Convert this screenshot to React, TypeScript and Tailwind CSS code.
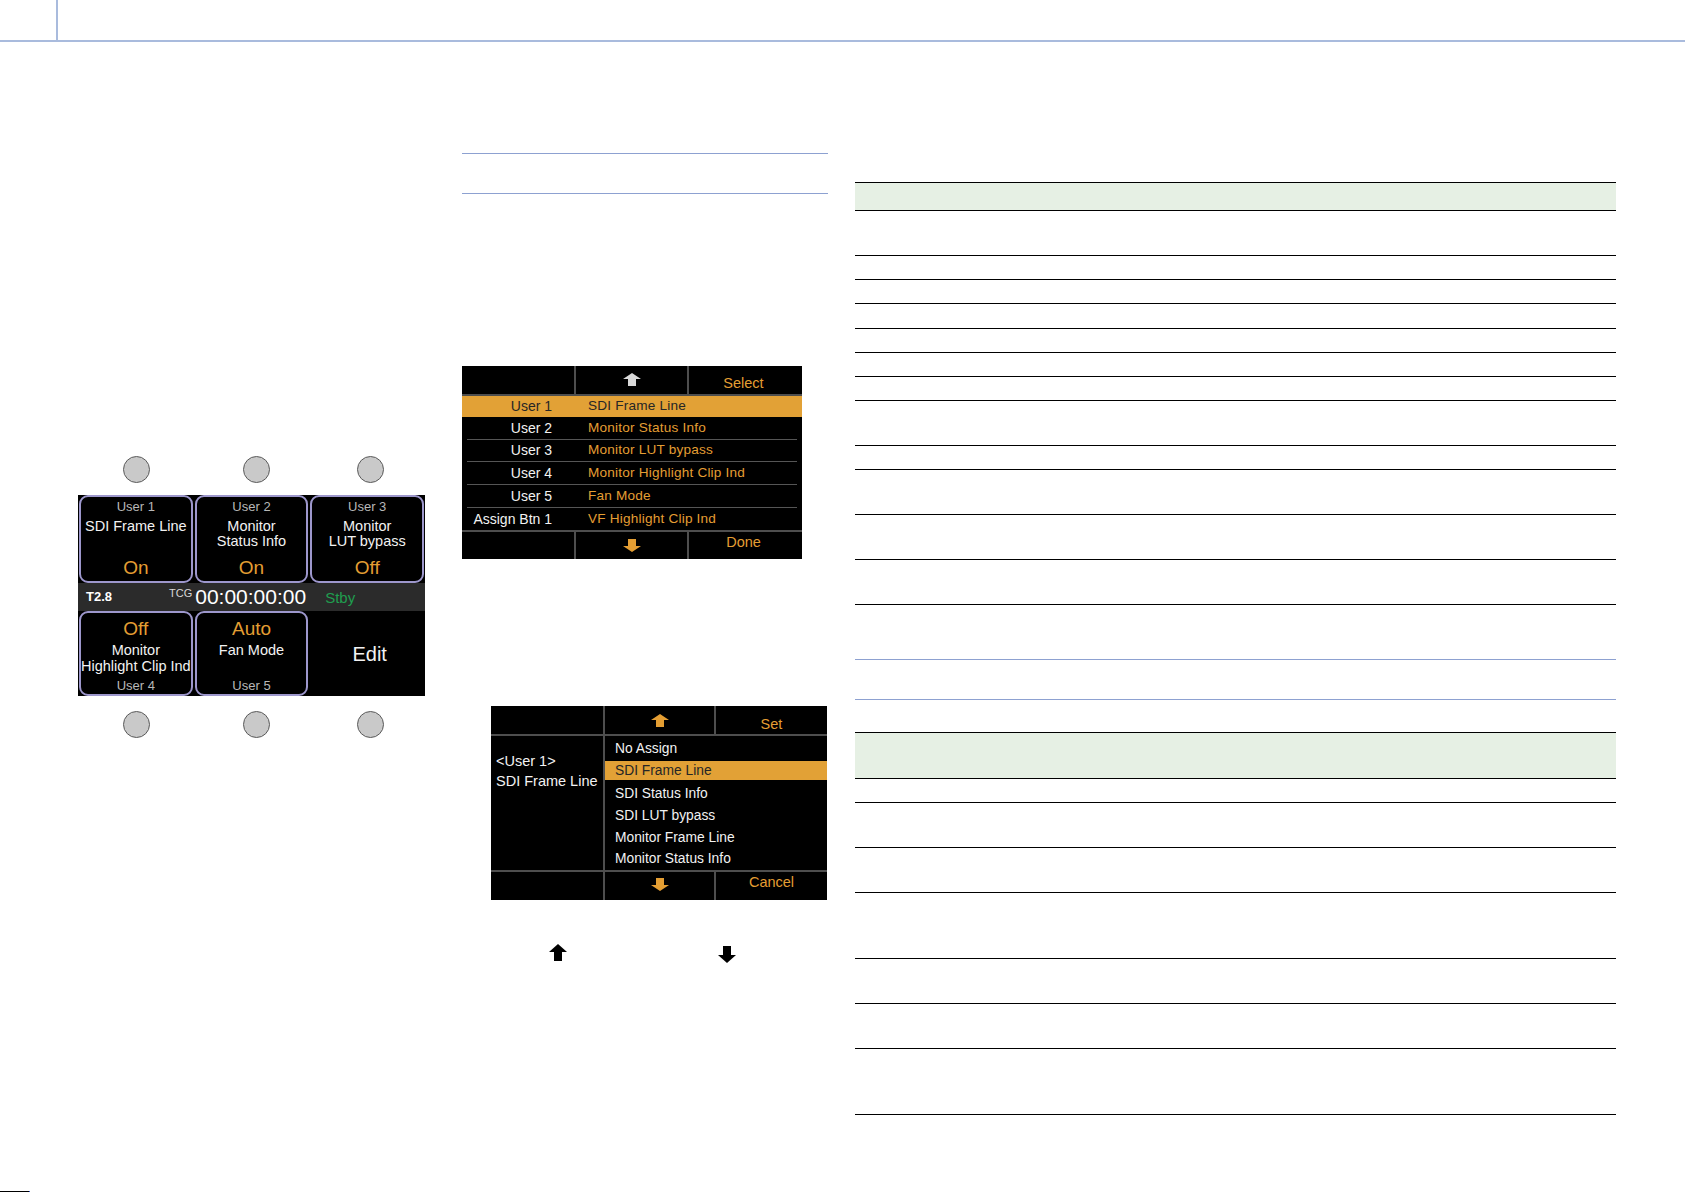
import React from "react";

const ORANGE = "text-[#e49e33]";

function BlockArrow({ dir, className }: { dir: "up" | "down"; className?: string }) {
  const points =
    dir === "up"
      ? "9,0 18,7.5 13,7.5 13,16 5,16 5,7.5 0,7.5"
      : "5,0 13,0 13,8.5 18,8.5 9,16 0,8.5 5,8.5";
  return (
    <svg viewBox="0 0 18 16" preserveAspectRatio="none" className={className} fill="currentColor">
      <polygon points={points} />
    </svg>
  );
}

function Knob({ className = "" }: { className?: string }) {
  return (
    <div className={`h-[27px] w-[27px] rounded-full border border-[#5a5a5a] bg-[#c9c9c9] ${className}`} />
  );
}

function KnobRow() {
  return (
    <div className="flex">
      <Knob className="ml-[45px]" />
      <Knob className="ml-[93px]" />
      <Knob className="ml-[87px]" />
    </div>
  );
}

function TopButton({ user, lines, value }: { user: string; lines: string[]; value: string }) {
  return (
    <div className="flex h-full w-[114px] flex-col items-center rounded-[9px] border-2 border-[#9d97cc] bg-black">
      <span className="mt-[2px] text-[13px] leading-[16px] text-[#b8b8b8]">{user}</span>
      <div className="mt-[4px] flex flex-col items-center">
        {lines.map((l) => (
          <span key={l} className="whitespace-nowrap text-[14.5px] leading-[15px] text-[#f2f2f2]">
            {l}
          </span>
        ))}
      </div>
      <span className={`mt-auto pb-[1px] text-[19px] leading-[24px] ${ORANGE}`}>{value}</span>
    </div>
  );
}

function BottomButton({ user, lines, value }: { user: string; lines: string[]; value: string }) {
  return (
    <div className="flex h-full w-[114px] flex-col items-center rounded-[9px] border-2 border-[#9d97cc] bg-black">
      <span className={`mt-[4px] text-[19px] leading-[24px] ${ORANGE}`}>{value}</span>
      <div className="mt-[1px] flex flex-col items-center">
        {lines.map((l) => (
          <span key={l} className="whitespace-nowrap text-[14.5px] leading-[16px] text-[#f2f2f2]">
            {l}
          </span>
        ))}
      </div>
      <span className="mt-auto text-[13px] leading-[16px] text-[#b8b8b8]">{user}</span>
    </div>
  );
}

function DevicePanel() {
  return (
    <div className="w-[347px] bg-black">
      <div className="flex h-[88px] gap-[2px] px-[1px]">
        <TopButton user="User 1" lines={["SDI Frame Line"]} value="On" />
        <TopButton user="User 2" lines={["Monitor", "Status Info"]} value="On" />
        <TopButton user="User 3" lines={["Monitor", "LUT bypass"]} value="Off" />
      </div>
      <div className="flex h-[28px] items-center bg-[#2b2b2b] text-white">
        <span className="w-[91px] pl-[8px] text-[13px] font-bold">T2.8</span>
        <span className="mb-[9px] text-[11px] leading-[12px] text-[#d8d8d8]">TCG</span>
        <span className="ml-[3px] text-[21px] leading-[24px]">00:00:00:00</span>
        <span className="ml-[19px] mt-[3px] text-[15px] text-[#1f9e4f]">Stby</span>
      </div>
      <div className="flex h-[85px] gap-[2px] px-[1px]">
        <BottomButton user="User 4" lines={["Monitor", "Highlight Clip Ind"]} value="Off" />
        <BottomButton user="User 5" lines={["Fan Mode"]} value="Auto" />
        <div className="flex w-[114px] items-center justify-center pl-[5px] text-[20px] text-[#f2f2f2]">Edit</div>
      </div>
    </div>
  );
}

const assignRows = [
  { label: "User 1", value: "SDI Frame Line", h: "h-[21px]" },
  { label: "User 2", value: "Monitor Status Info", h: "h-[23px]" },
  { label: "User 3", value: "Monitor LUT bypass", h: "h-[22px]" },
  { label: "User 4", value: "Monitor Highlight Clip Ind", h: "h-[23px]" },
  { label: "User 5", value: "Fan Mode", h: "h-[23px]" },
  { label: "Assign Btn 1", value: "VF Highlight Clip Ind", h: "h-[22px]" },
];

function AssignMenu() {
  return (
    <div className="w-[340px] bg-black">
      <div className="flex h-[30px] border-b-2 border-[#4e4e4e]">
        <div className="w-[114px] border-r-2 border-[#4e4e4e]" />
        <div className="flex w-[113px] items-center justify-center border-r-2 border-[#4e4e4e] pb-[2px]">
          <BlockArrow dir="up" className="h-[13px] w-[18px] text-[#d9d9d9]" />
        </div>
        <div className={`flex flex-1 items-center justify-center pr-[4px] pt-[7px] text-[14.5px] ${ORANGE}`}>Select</div>
      </div>
      {assignRows.map((r, i) => (
        <div key={r.label} className={`flex flex-col ${r.h}`}>
          <div
            className={`flex flex-1 items-center text-[14px] ${i === 0 ? "bg-[#e2a136]" : ""}`}
          >
            <span className={`w-[90px] text-right ${i === 0 ? "text-[#262626]" : "text-[#f2f2f2]"}`}>{r.label}</span>
            <span className={`ml-[36px] text-[13.6px] tracking-[0.2px] ${i === 0 ? "text-[#262626]" : ORANGE}`}>
              {r.value}
            </span>
          </div>
          {i < assignRows.length - 1 && <div className="mx-[5px] h-px bg-[#555]" />}
        </div>
      ))}
      <div className="flex h-[29px] border-t-2 border-[#4e4e4e]">
        <div className="w-[114px] border-r-2 border-[#4e4e4e]" />
        <div className="flex w-[113px] items-center justify-center border-r-2 border-[#4e4e4e]">
          <BlockArrow dir="down" className={`h-[13px] w-[18px] ${ORANGE}`} />
        </div>
        <div className={`flex flex-1 items-center justify-center pb-[6px] pr-[4px] text-[14.5px] ${ORANGE}`}>Done</div>
      </div>
    </div>
  );
}

const functionItems = [
  { name: "No Assign", h: "h-[23px]" },
  { name: "SDI Frame Line", h: "h-[22px]" },
  { name: "SDI Status Info", h: "h-[22px]" },
  { name: "SDI LUT bypass", h: "h-[22px]" },
  { name: "Monitor Frame Line", h: "h-[22px]" },
  { name: "Monitor Status Info", h: "h-[21px]" },
];

function FunctionMenu() {
  return (
    <div className="w-[336px] bg-black">
      <div className="flex h-[30px] border-b-2 border-[#4e4e4e]">
        <div className="w-[114px] border-r-2 border-[#4e4e4e]" />
        <div className="flex w-[111px] items-center justify-center border-r-2 border-[#4e4e4e]">
          <BlockArrow dir="up" className={`h-[13px] w-[18px] ${ORANGE}`} />
        </div>
        <div className={`flex flex-1 items-center justify-center pt-[9px] text-[14.5px] ${ORANGE}`}>Set</div>
      </div>
      <div className="flex h-[134px]">
        <div className="w-[114px] border-r-2 border-[#4e4e4e] pl-[5px] pt-[15px] text-[14.5px] leading-[20px] text-[#f2f2f2]">
          <div>&lt;User 1&gt;</div>
          <div className="whitespace-nowrap">SDI Frame Line</div>
        </div>
        <div className="flex flex-1 flex-col pt-[2px]">
          {functionItems.map((f, i) =>
            i === 1 ? (
              <div key={f.name} className={f.h}>
                <div className="flex h-[19px] items-center bg-[#e2a136] pl-[10px] pt-[2px] text-[13.8px] text-[#262626]">
                  {f.name}
                </div>
              </div>
            ) : (
              <div key={f.name} className={`flex items-center pl-[10px] text-[13.8px] text-[#f2f2f2] ${f.h}`}>
                {f.name}
              </div>
            )
          )}
        </div>
      </div>
      <div className="flex h-[30px] border-t-2 border-[#4e4e4e]">
        <div className="w-[114px] border-r-2 border-[#4e4e4e]" />
        <div className="flex w-[111px] items-center justify-center border-r-2 border-[#4e4e4e] pb-[4px]">
          <BlockArrow dir="down" className={`h-[13px] w-[18px] ${ORANGE}`} />
        </div>
        <div className={`flex flex-1 items-center justify-center pb-[6px] text-[14.5px] ${ORANGE}`}>Cancel</div>
      </div>
    </div>
  );
}

function RuledTable({ rows }: { rows: number[] }) {
  return (
    <div className="border-t border-black">
      {rows.map((h, i) => (
        <div
          key={i}
          style={{ height: h }}
          className={`border-b border-black ${i === 0 ? "bg-[#e6f0e4]" : ""}`}
        />
      ))}
    </div>
  );
}

export default function App() {
  return (
    <div className="flex h-[1192px] w-[1685px] flex-col overflow-hidden bg-white font-['Liberation_Sans',Arial,sans-serif]">
      {/* page header rule */}
      <div className="h-[42px] shrink-0 border-b-2 border-[#a9bbdd]">
        <div className="h-full w-[58px] border-r-2 border-[#a9bbdd]" />
      </div>

      <div className="flex flex-1">
        {/* left: control panel */}
        <div className="w-[462px] shrink-0 pl-[78px] pt-[414px]">
          <KnobRow />
          <div className="mt-[12px]">
            <DevicePanel />
          </div>
          <div className="mt-[15px]">
            <KnobRow />
          </div>
        </div>

        {/* middle: menu screens */}
        <div className="w-[366px] shrink-0 pt-[111px]">
          <div className="h-px bg-[#8da1d1]" />
          <div className="mt-[39px] h-px bg-[#8da1d1]" />
          <div className="mt-[172px]">
            <AssignMenu />
          </div>
          <div className="ml-[29px] mt-[147px]">
            <FunctionMenu />
          </div>
          <div className="mt-[44px] flex">
            <BlockArrow dir="up" className="ml-[87px] h-[17px] w-[18px] text-black" />
            <BlockArrow dir="down" className="ml-[151px] mt-[2px] h-[17px] w-[18px] text-black" />
          </div>
        </div>

        {/* right: settings tables */}
        <div className="ml-[27px] w-[761px] shrink-0 pt-[140px]">
          <RuledTable rows={[28, 45, 24, 24, 25, 24, 24, 24, 45, 24, 45, 45, 45]} />
          <div className="mt-[54px] h-px bg-[#8da1d1]" />
          <div className="mt-[39px] h-px bg-[#8da1d1]" />
          <div className="mt-[32px]">
            <RuledTable rows={[46, 24, 45, 45, 66, 45, 45, 66]} />
          </div>
        </div>
      </div>

      <div className="flex h-px shrink-0">
        <div className="w-[29px] bg-black" />
        <div className="w-px bg-[#3355cc]" />
      </div>
    </div>
  );
}
